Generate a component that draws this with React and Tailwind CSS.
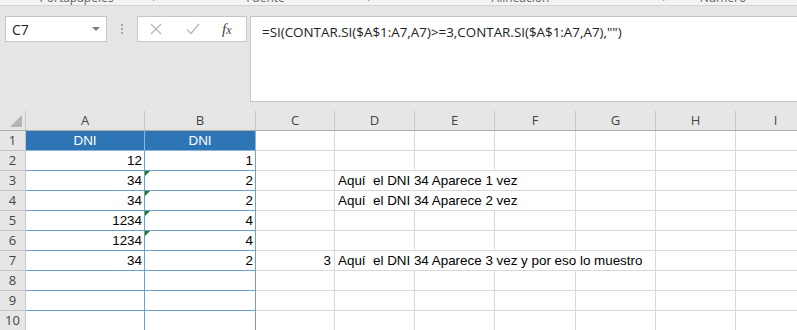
import React from "react";

const COLS = [
  { k: "A", w: "w-[119px]" },
  { k: "B", w: "w-[111px]" },
  { k: "C", w: "w-[79px]" },
  { k: "D", w: "w-[80px]" },
  { k: "E", w: "w-[80px]" },
  { k: "F", w: "w-[81px]" },
  { k: "G", w: "w-[80px]" },
  { k: "H", w: "w-[80px]" },
  { k: "I", w: "w-[80px]" },
];

const ROWS = [
  { a: "DNI", b: "DNI", head: true },
  { a: "12", b: "1" },
  { a: "34", b: "2", tri: true, d: "Aquí  el DNI 34 Aparece 1 vez", span: 3 },
  { a: "34", b: "2", tri: true, d: "Aquí  el DNI 34 Aparece 2 vez", span: 3 },
  { a: "1234", b: "4", tri: true },
  { a: "1234", b: "4", tri: true },
  { a: "34", b: "2", c: "3", d: "Aquí  el DNI 34 Aparece 3 vez y por eso lo muestro", span: 4 },
  {},
  {},
  {},
];

const cellFont = { fontFamily: '"Liberation Sans", Arial, sans-serif' };

function Row({ r, i }) {
  const blue = "border-r border-b border-[#6e9fd3]";
  const gray = "border-r border-b border-[#d9d9d9]";
  const rest = [];
  rest.push(
    <div key="c" className={`w-[79px] h-full ${gray} flex items-center justify-end pr-[3px] pt-[2px]`}>
      {r.c || ""}
    </div>
  );
  let startIdx = 3;
  if (r.d) {
    const widths = { 3: "w-[241px]", 4: "w-[321px]" };
    rest.push(
      <div key="d" className={`${widths[r.span]} h-full ${gray} flex items-center pl-[3px] pt-[2px] whitespace-pre`}>
        {r.d}
      </div>
    );
    startIdx = 3 + r.span;
  }
  for (let c = startIdx; c < COLS.length; c++) {
    rest.push(<div key={c} className={`${COLS[c].w} h-full ${gray} shrink-0`} />);
  }
  return (
    <div className="flex h-[20px] text-[13.4px] text-black" style={cellFont}>
      <div className="w-[26px] shrink-0 h-full bg-[#e6e6e6] border-r border-b border-[#c6c6c6] flex items-center justify-center pt-[1px] text-[13px] text-[#444]" style={{ fontFamily: '"Open Sans", sans-serif' }}>
        {i + 1}
      </div>
      {r.head ? (
        <>
          <div className="w-[119px] shrink-0 h-full bg-[#2e75b6] border-r border-b border-[#8fb4de] text-white flex items-center justify-center pt-[2px]">{r.a}</div>
          <div className="w-[111px] shrink-0 h-full bg-[#2e75b6] border-r border-b border-[#8fb4de] text-white flex items-center justify-center pt-[2px]">{r.b}</div>
        </>
      ) : (
        <>
          <div className={`w-[119px] shrink-0 h-full bg-white ${blue} flex items-center justify-end pr-[2px] pt-[2px]`}>{r.a || ""}</div>
          <div className={`relative w-[111px] shrink-0 h-full bg-white ${blue} flex items-center justify-end pr-[2px] pt-[2px]`}>
            {r.tri && (
              <span className="absolute left-0 top-0 w-0 h-0 border-t-[5px] border-r-[5px] border-t-[#1e7b1e] border-r-transparent" />
            )}
            {r.b || ""}
          </div>
        </>
      )}
      <div className="flex h-full bg-white flex-1">{rest}</div>
    </div>
  );
}

export default function App() {
  return (
    <div className="w-[797px] h-[330px] bg-[#e6e6e6] overflow-hidden">
      {/* ribbon group labels (clipped at the top, as in the screenshot) */}
      <div className="h-[6px] border-b border-[#d4d4d4] overflow-hidden bg-[#f3f3f3]">
        <div className="flex items-start text-[12px] leading-[12px] text-[#666] -mt-[8px]" style={{ fontFamily: '"Open Sans", sans-serif' }}>
          <div className="w-[153px] text-center">Portapapeles</div>
          <div className="w-[10px] text-[10px]">⌐</div>
          <div className="w-[205px] text-center">Fuente</div>
          <div className="w-[10px] text-[10px]">⌐</div>
          <div className="w-[285px] text-center">Alineación</div>
          <div className="w-[10px] text-[10px]">⌐</div>
          <div className="w-[100px] text-center">Número</div>
        </div>
      </div>

      {/* formula bar */}
      <div className="flex items-start h-[105px] pt-[10px]">
        <div className="ml-[5px] w-[102px] h-[26px] bg-white border border-[#c6c6c6] flex items-center justify-between pl-[6px] pr-[6px]">
          <span className="text-[14px] text-[#222]" style={{ fontFamily: '"Open Sans", sans-serif' }}>C7</span>
          <svg width="8" height="5" viewBox="0 0 8 5"><path d="M0 0 L8 0 L4 4 Z" fill="#7a7a7a" /></svg>
        </div>
        <div className="w-[30px] h-[26px] flex flex-col items-center justify-center gap-[2px]">
          <span className="w-[2px] h-[2px] bg-[#a8a8a8]" />
          <span className="w-[2px] h-[2px] bg-[#a8a8a8]" />
          <span className="w-[2px] h-[2px] bg-[#a8a8a8]" />
        </div>
        <div className="w-[110px] h-[26px] bg-white border border-[#c6c6c6] flex items-center">
          <svg className="ml-[12px]" width="12" height="12" viewBox="0 0 12 12">
            <path d="M1 1 L11 11 M11 1 L1 11" stroke="#b8b8b8" strokeWidth="1.3" fill="none" />
          </svg>
          <svg className="ml-[24px]" width="14" height="12" viewBox="0 0 14 12">
            <path d="M1 6.5 L5 10.5 L13 1" stroke="#b8b8b8" strokeWidth="1.4" fill="none" />
          </svg>
          <span className="ml-[22px] text-[15px] italic text-[#444] leading-none" style={{ fontFamily: '"Liberation Serif", serif' }}>
            f<span className="text-[12px]">x</span>
          </span>
        </div>
        <div className="ml-[3px] flex-1 h-[86px] bg-white border-y border-l border-[#c6c6c6] pl-[11px] pt-[5px] text-[13.4px] text-[#222] whitespace-nowrap" style={{ fontFamily: '"Open Sans", sans-serif' }}>
          =SI(CONTAR.SI($A$1:A7,A7)&gt;=3,CONTAR.SI($A$1:A7,A7),"")
        </div>
      </div>

      {/* column headers */}
      <div className="flex h-[20px] border-b border-[#ababab] text-[13px] text-[#444]" style={{ fontFamily: '"Open Sans", sans-serif' }}>
        <div className="w-[26px] shrink-0 h-full border-r border-[#c6c6c6] flex items-end justify-end pr-[3px] pb-[3px]">
          <svg width="12" height="12" viewBox="0 0 12 12"><path d="M12 0 L12 12 L0 12 Z" fill="#b4b4b4" /></svg>
        </div>
        {COLS.map((c) => (
          <div key={c.k} className={`${c.w} shrink-0 h-full border-r border-[#c6c6c6] flex items-center justify-center`}>
            {c.k}
          </div>
        ))}
      </div>

      {ROWS.map((r, i) => (
        <Row key={i} r={r} i={i} />
      ))}
    </div>
  );
}
